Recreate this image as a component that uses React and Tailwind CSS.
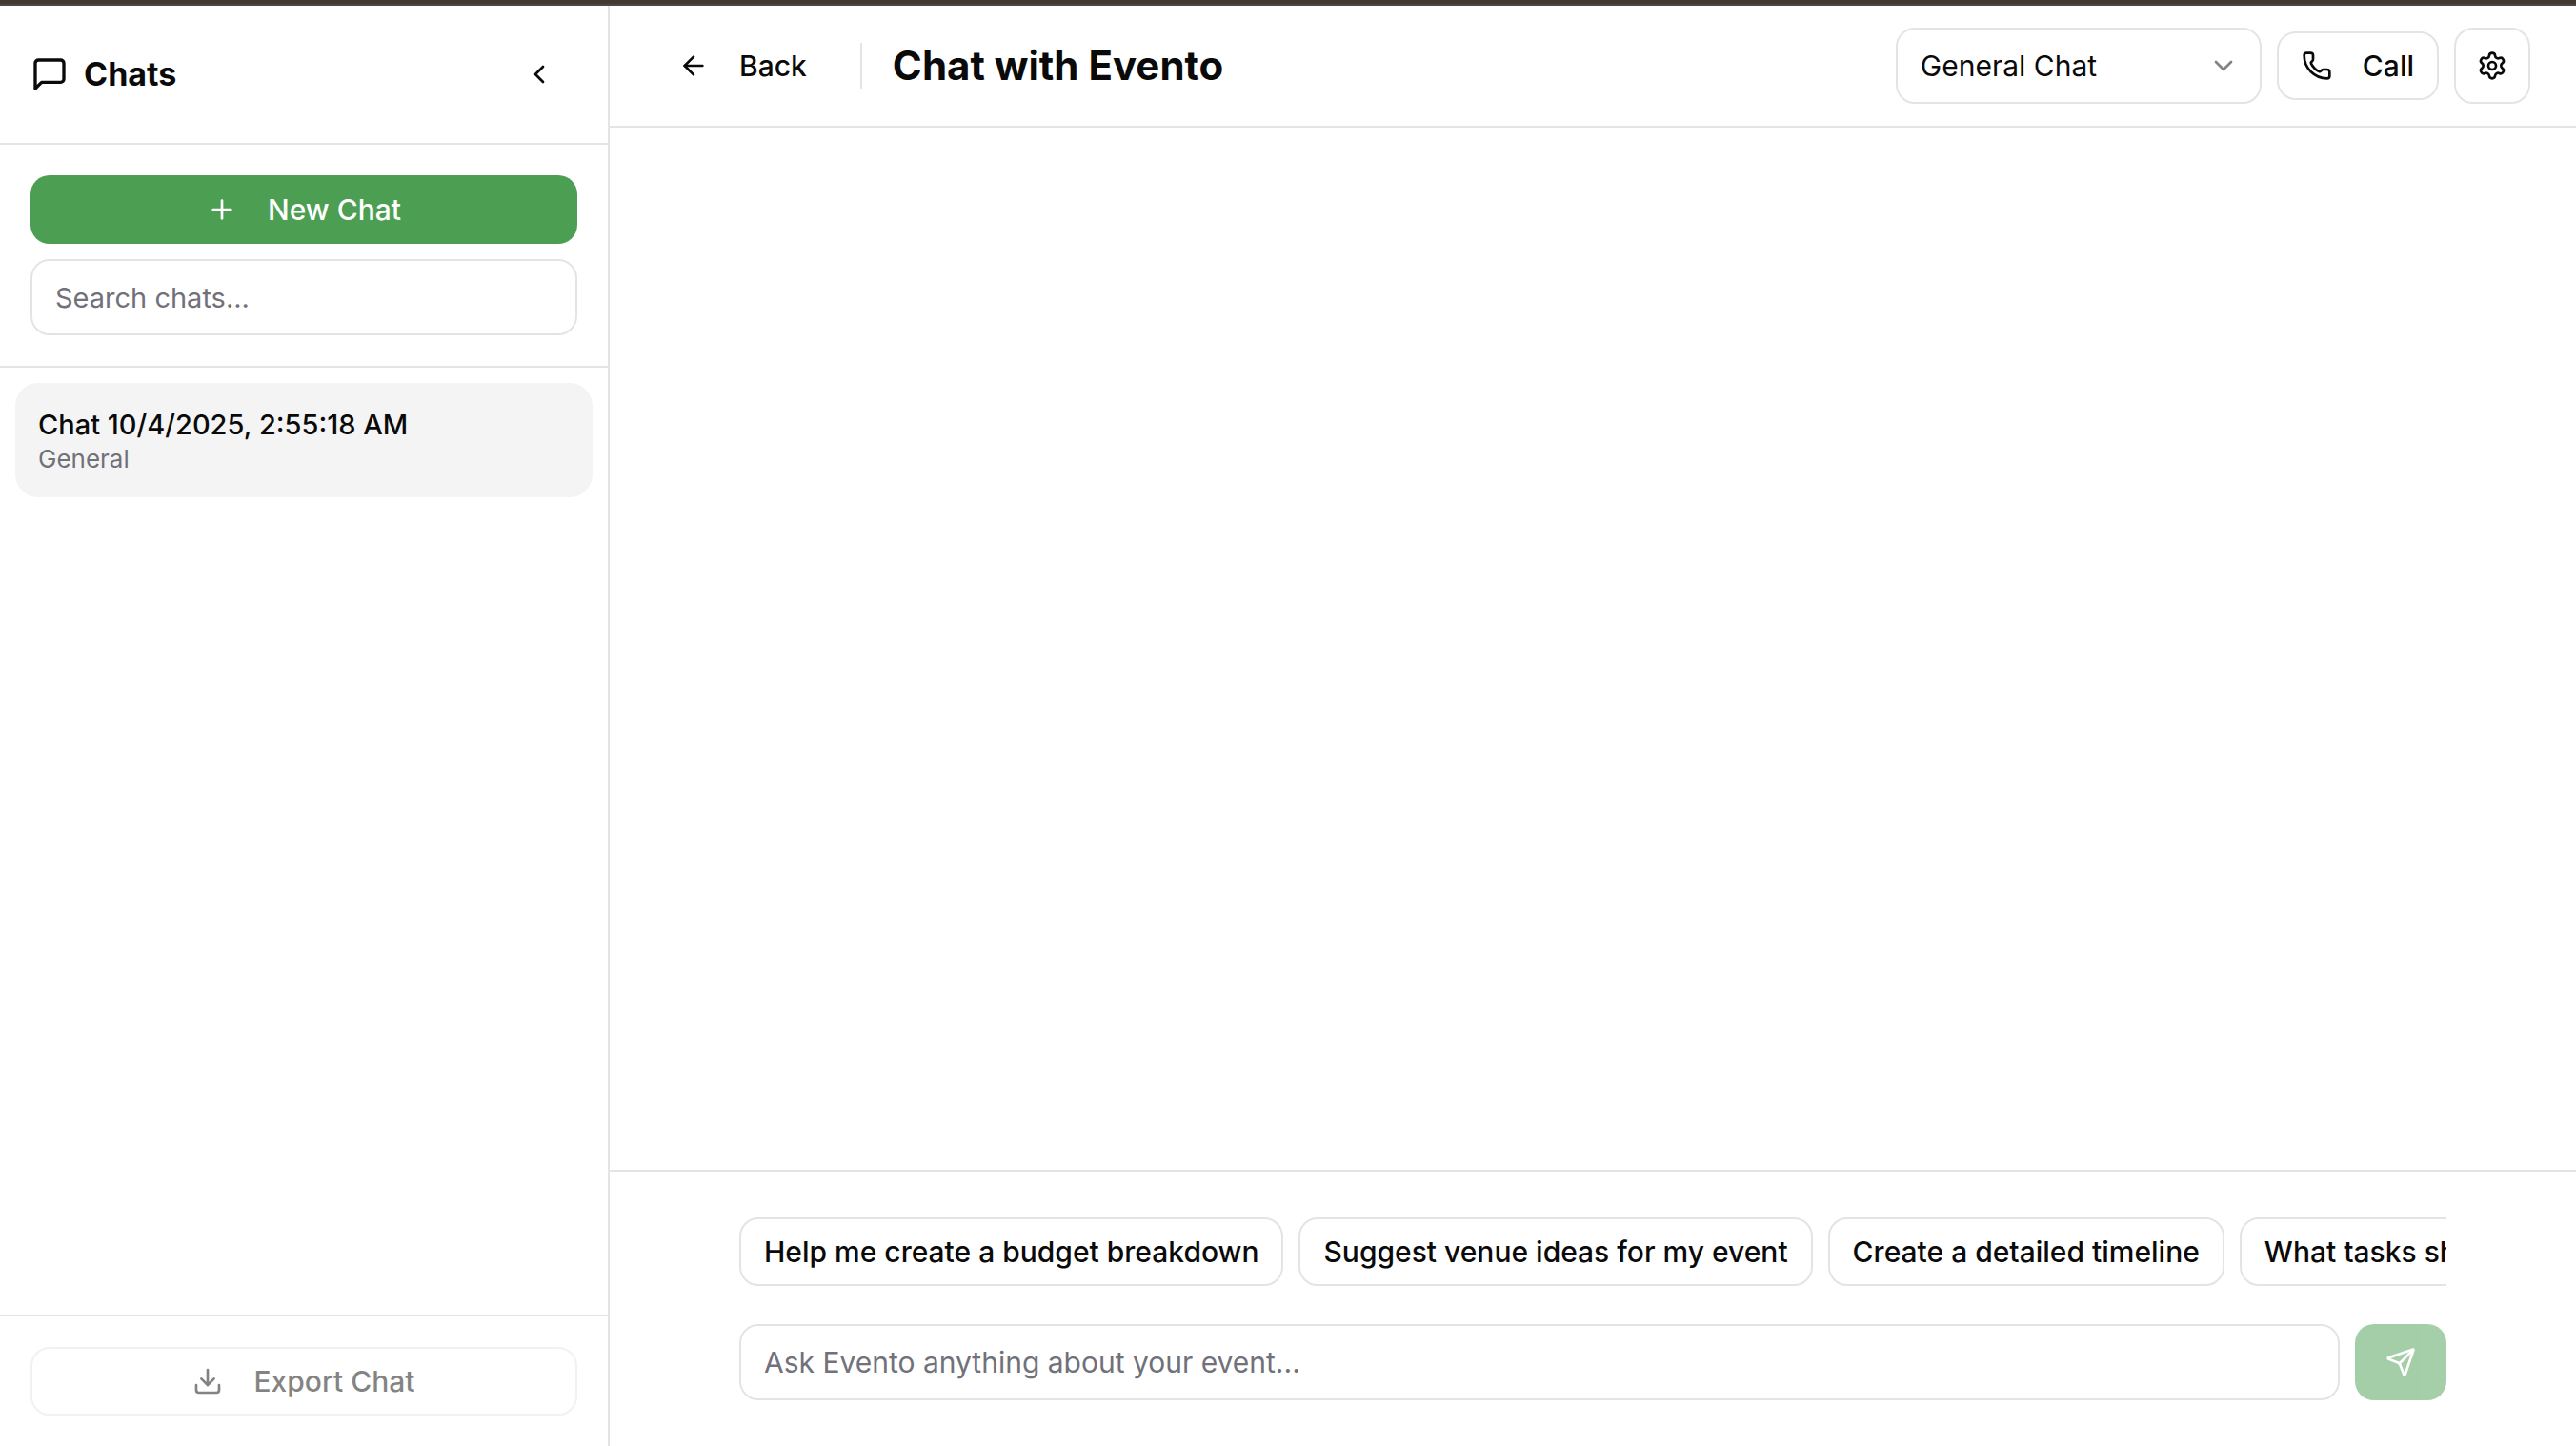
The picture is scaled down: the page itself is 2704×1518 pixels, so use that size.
import React from "react";
import { ChevronLeft, ChevronDown, Plus, Download, ArrowLeft, Phone, Settings, Send } from "lucide-react";

const prompts = [
  "Help me create a budget breakdown",
  "Suggest venue ideas for my event",
  "Create a detailed timeline",
  "What tasks should I prioritize?",
];

const outline = "rounded-[20px] border-2 border-[#e4e4e4] bg-white";

function ChatIcon() {
  return (
    <svg width="40" height="40" viewBox="0 0 24 24" fill="none" stroke="currentColor" strokeWidth="2" strokeLinecap="round" strokeLinejoin="round" aria-hidden="true">
      <path d="M21 15a2 2 0 0 1-2 2H7l-4 4V5a2 2 0 0 1 2-2h14a2 2 0 0 1 2 2z" />
    </svg>
  );
}

function Sidebar() {
  return (
    <aside className="flex w-160 shrink-0 flex-col border-r-2 border-[#e4e4e4]">
      <div className="box-content flex h-36 shrink-0 items-center justify-between border-b-2 border-[#e4e4e4] px-8">
        <h2 className="flex items-center gap-4 text-[34px] leading-10 font-bold">
          <ChatIcon />
          Chats
        </h2>
        <button type="button" aria-label="Collapse sidebar" className="flex h-18 w-20 items-center justify-center">
          <ChevronLeft size={32} />
        </button>
      </div>
      <div className="flex flex-col gap-4 border-b-2 border-[#e4e4e4] p-8">
        <button type="button" className="flex h-18 items-center justify-center gap-8 rounded-[20px] bg-[#4c9f52] font-medium text-white">
          <Plus size={32} />
          New Chat
        </button>
        <input type="text" aria-label="Search chats" placeholder="Search chats..." className={`${outline} h-20 w-full px-6 text-[29px] placeholder:text-[#71717a]`} />
      </div>
      <div className="min-h-0 flex-1 p-4">
        <button type="button" className="flex w-full flex-col rounded-3xl bg-[#f4f4f4] p-6 text-left">
          <span className="text-[29px] leading-10 font-medium">Chat 10/4/2025, 2:55:18 AM</span>
          <span className="text-[26px] leading-8 text-[#71717a]">General</span>
        </button>
      </div>
      <div className="border-t-2 border-[#e4e4e4] p-8">
        <button type="button" disabled className={`${outline} flex h-18 w-full items-center justify-center gap-8 font-medium opacity-50`}>
          <Download size={32} />
          Export Chat
        </button>
      </div>
    </aside>
  );
}

function Header() {
  return (
    <header className="flex h-32 shrink-0 items-center justify-between border-b-2 border-[#e4e4e4] px-12">
      <div className="flex items-center gap-8">
        <button type="button" className="flex h-18 items-center gap-8 px-6 font-medium">
          <ArrowLeft size={32} />
          Back
        </button>
        <div className="h-12 w-0.5 bg-[#e4e4e4]" />
        <h1 className="text-[42px] leading-14 font-bold">Chat with Evento</h1>
      </div>
      <div className="flex items-center gap-4">
        <div className="relative w-96">
          <select aria-label="Chat type" className={`${outline} h-20 w-full appearance-none px-6`}>
            <option>General Chat</option>
          </select>
          <ChevronDown size={32} className="pointer-events-none absolute top-6 right-6 opacity-50" />
        </div>
        <button type="button" className={`${outline} flex h-18 items-center gap-8 px-6 font-medium`}>
          <Phone size={32} />
          Call
        </button>
        <button type="button" aria-label="Settings" className={`${outline} flex size-20 items-center justify-center`}>
          <Settings size={32} />
        </button>
      </div>
    </header>
  );
}

function Composer() {
  return (
    <footer className="border-t-2 border-[#e4e4e4] p-12">
      <div className="mx-auto flex max-w-448 flex-col gap-10">
        <div className="flex gap-4 overflow-hidden">
          {prompts.map((p) => (
            <button key={p} type="button" className={`${outline} h-18 shrink-0 px-6 font-medium whitespace-nowrap`}>
              {p}
            </button>
          ))}
        </div>
        <form className="flex gap-4">
          <input type="text" aria-label="Message" placeholder="Ask Evento anything about your event..." className={`${outline} h-20 min-w-0 flex-1 px-6 placeholder:text-[#71717a]`} />
          <button type="button" disabled aria-label="Send" className="flex h-20 w-24 items-center justify-center rounded-[20px] bg-[#4c9f52] text-white opacity-50">
            <Send size={32} />
          </button>
        </form>
      </div>
    </footer>
  );
}

export default function App() {
  return (
    <div className="flex h-screen flex-col bg-white font-['Inter',sans-serif] text-[30px] leading-10 text-[#0a0a0a]">
      <div className="h-1.5 shrink-0 border-b-2 border-[#4b4747] bg-[#443932]" />
      <div className="flex min-h-0 flex-1">
        <Sidebar />
        <main className="flex min-w-0 flex-1 flex-col">
          <Header />
          <section aria-label="Conversation" className="min-h-0 flex-1" />
          <Composer />
        </main>
      </div>
    </div>
  );
}
